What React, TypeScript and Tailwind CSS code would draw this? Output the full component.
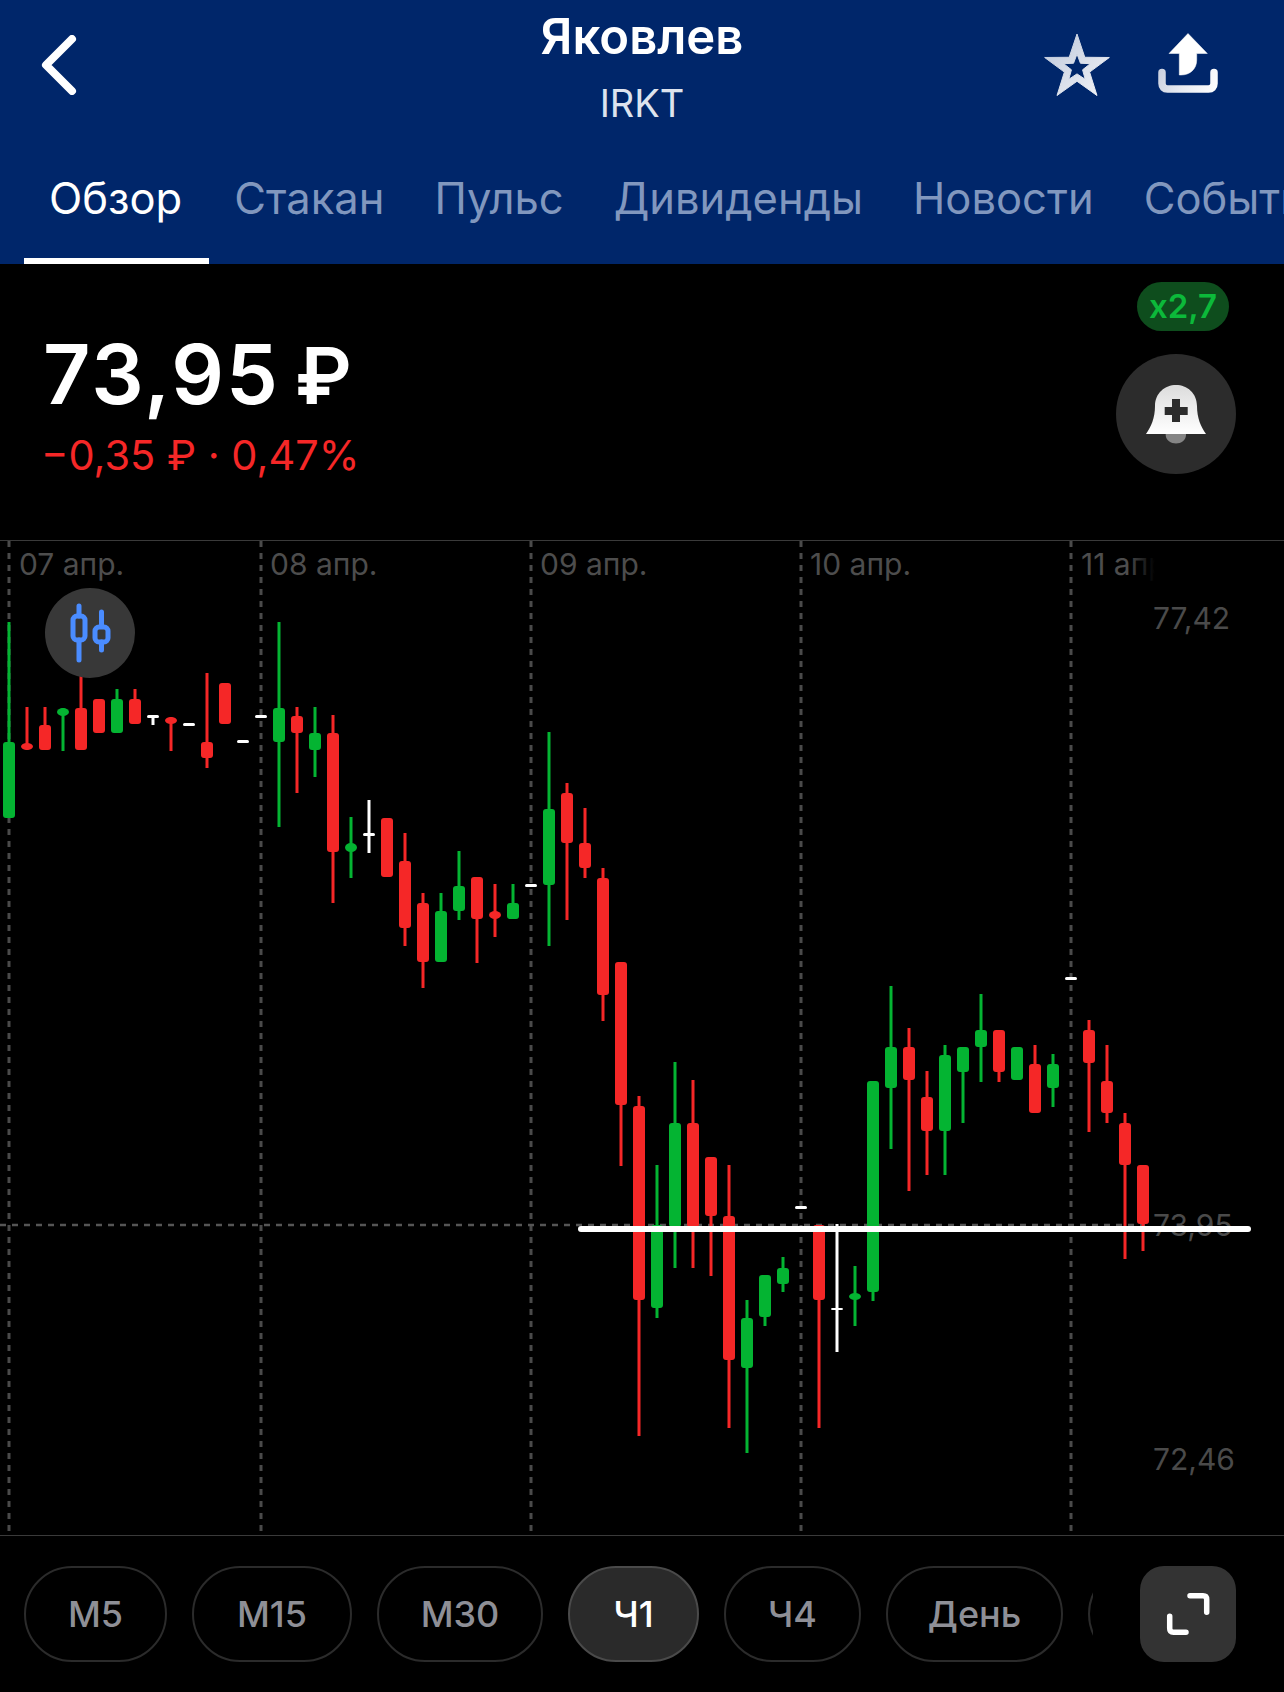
import React from "react";

type Candle = ["g" | "r" | "w", number, number, number, number];

const COLORS = { g: "#04B432", r: "#F52727", w: "#FFFFFF" };

// kind, wick top, wick bottom, body top, body bottom (0 wick = no wick)
const CANDLES: Candle[] = [
  ["g", 622, 818, 742, 818],
  ["r", 707, 750, 743, 750],
  ["r", 707, 750, 725, 750],
  ["g", 708, 751, 708, 716],
  ["r", 660, 750, 708, 750],
  ["r", 0, 0, 699, 733],
  ["g", 689, 733, 699, 733],
  ["r", 689, 724, 699, 724],
  ["w", 716, 725, 715, 718],
  ["r", 717, 751, 717, 724],
  ["w", 0, 0, 723, 726],
  ["r", 673, 768, 742, 758],
  ["r", 0, 0, 683, 724],
  ["w", 0, 0, 740, 743],
  ["w", 0, 0, 715, 718],
  ["g", 622, 827, 708, 742],
  ["r", 707, 793, 716, 733],
  ["g", 707, 777, 733, 750],
  ["r", 715, 903, 733, 852],
  ["g", 817, 878, 843, 852],
  ["w", 800, 853, 833, 836],
  ["r", 0, 0, 818, 877],
  ["r", 833, 946, 861, 928],
  ["r", 893, 988, 903, 962],
  ["g", 893, 962, 911, 962],
  ["g", 851, 920, 886, 911],
  ["r", 877, 963, 877, 919],
  ["r", 884, 937, 911, 919],
  ["g", 884, 919, 903, 919],
  ["w", 0, 0, 884, 887],
  ["g", 732, 946, 809, 885],
  ["r", 783, 920, 793, 843],
  ["r", 808, 878, 843, 868],
  ["r", 868, 1021, 878, 995],
  ["r", 962, 1166, 962, 1105],
  ["r", 1096, 1436, 1106, 1300],
  ["g", 1165, 1318, 1225, 1308],
  ["g", 1062, 1268, 1123, 1227],
  ["r", 1080, 1268, 1123, 1227],
  ["r", 1157, 1276, 1157, 1216],
  ["r", 1165, 1428, 1216, 1360],
  ["g", 1300, 1453, 1318, 1368],
  ["g", 1275, 1326, 1275, 1317],
  ["g", 1257, 1292, 1268, 1284],
  ["w", 0, 0, 1206, 1209],
  ["r", 1225, 1428, 1225, 1300],
  ["w", 1224, 1352, 1308, 1310],
  ["g", 1266, 1326, 1293, 1300],
  ["g", 1081, 1301, 1081, 1292],
  ["g", 986, 1149, 1047, 1088],
  ["r", 1028, 1191, 1047, 1080],
  ["r", 1071, 1175, 1097, 1131],
  ["g", 1045, 1175, 1055, 1131],
  ["g", 1047, 1123, 1047, 1072],
  ["g", 994, 1082, 1030, 1047],
  ["r", 1030, 1082, 1030, 1072],
  ["g", 0, 0, 1047, 1080],
  ["r", 1045, 1113, 1064, 1113],
  ["g", 1054, 1107, 1064, 1088],
  ["w", 0, 0, 977, 980],
  ["r", 1020, 1132, 1030, 1063],
  ["r", 1045, 1123, 1081, 1113],
  ["r", 1113, 1259, 1123, 1165],
  ["r", 1165, 1251, 1165, 1224],
];

const GRID_X = [9, 261, 531, 801, 1071];
const DATES: [number, string][] = [
  [19, "07 апр."],
  [270, "08 апр."],
  [540, "09 апр."],
  [810, "10 апр."],
];
const AXIS_FONT = "Inter, 'Noto Sans', sans-serif";

function CandleMark({ c, i }: { c: Candle; i: number }) {
  const [kind, wt, wb, bt, bb] = c;
  const cx = 9 + 18 * i;
  const fill = COLORS[kind];
  const h = bb - bt;
  const thin = h < 10;
  return (
    <g fill={fill}>
      {wt > 0 && <rect x={cx - 1.5} y={wt} width={3} height={wb - wt} />}
      <rect
        x={cx - 6}
        y={bt}
        width={12}
        height={h}
        rx={kind === "w" ? 1.5 : thin ? 6 : 3}
        ry={kind === "w" ? 1.5 : thin ? h / 2 : 3}
      />
    </g>
  );
}

function Chart() {
  return (
    <svg
      className="block w-[1284px] h-[994px]"
      viewBox="0 541 1284 994"
      xmlns="http://www.w3.org/2000/svg"
    >
      <defs>
        <linearGradient id="fadeDate" gradientUnits="userSpaceOnUse" x1="1128" y1="0" x2="1155" y2="0">
          <stop offset="0" stopColor="#4d4d4d" />
          <stop offset="1" stopColor="#4d4d4d" stopOpacity="0" />
        </linearGradient>
      </defs>
      {GRID_X.map((x) => (
        <line key={x} x1={x} x2={x} y1={541} y2={1535} stroke="#4a4a4a" strokeWidth={3} strokeDasharray="6 6" />
      ))}
      <line x1={0} x2={1145} y1={1225} y2={1225} stroke="#555555" strokeWidth={2.5} strokeDasharray="6 6" />
      {DATES.map(([x, t]) => (
        <text key={t} x={x} y={575} fontFamily={AXIS_FONT} fontSize={30} fill="#4d4d4d">
          {t}
        </text>
      ))}
      <text x={1081} y={575} fontFamily={AXIS_FONT} fontSize={30} fill="url(#fadeDate)">
        11 апр.
      </text>
      <text x={1153} y={629} fontFamily={AXIS_FONT} fontSize={30} fill="#4a4a4a">
        77,42
      </text>
      <text x={1153} y={1236} fontFamily={AXIS_FONT} fontSize={30} fill="#4a4a4a">
        73,95
      </text>
      <text x={1153} y={1470} fontFamily={AXIS_FONT} fontSize={30} fill="#4a4a4a">
        72,46
      </text>
      {CANDLES.map((c, i) => (
        <CandleMark key={i} c={c} i={i} />
      ))}
      <rect x={578} y={1226} width={673} height={6} rx={3} fill="#FFFFFF" />
    </svg>
  );
}

function starPath(cx: number, cy: number, r: number, ratio: number) {
  const outer: string[] = [];
  for (let k = 0; k < 10; k++) {
    const rad = k % 2 === 0 ? r : r * ratio;
    const a = (-90 + k * 36) * (Math.PI / 180);
    outer.push(`${(cx + rad * Math.cos(a)).toFixed(2)} ${(cy + rad * Math.sin(a)).toFixed(2)}`);
  }
  return "M" + outer.join("L") + "Z";
}

function StarIcon() {
  return (
    <svg width="72" height="70" viewBox="0 0 72 70" className="block">
      <defs>
        <linearGradient id="starG" x1="0" y1="0" x2="1" y2="1">
          <stop offset="0" stopColor="#bcc6da" />
          <stop offset="1" stopColor="#f4f5f8" />
        </linearGradient>
      </defs>
      <path
        d={starPath(36, 36, 34, 0.39) + starPath(36, 36, 14, 0.42)}
        fill="url(#starG)"
        fillRule="evenodd"
        stroke="url(#starG)"
        strokeWidth={1}
        strokeLinejoin="round"
      />
    </svg>
  );
}

function ShareIcon() {
  return (
    <svg width="62" height="62" viewBox="1157 32 62 62" className="block">
      <defs>
        <linearGradient id="shareG" gradientUnits="userSpaceOnUse" x1="1158" y1="60" x2="1218" y2="90">
          <stop offset="0" stopColor="#c4cbdc" />
          <stop offset="0.5" stopColor="#e8ebf2" />
          <stop offset="1" stopColor="#ffffff" />
        </linearGradient>
      </defs>
      <path
        d="M1188 33.5L1207.3 53.5H1196.7V60C1196.7 69 1190 75 1181 75H1179.3V53.5H1169Z"
        fill="#ffffff"
        stroke="#ffffff"
        strokeWidth={0.5}
        strokeLinejoin="round"
      />
      <path
        d="M1162 72.5V83.5C1162 87 1164 89 1167.5 89H1208.5C1212 89 1214 87 1214 83.5V72.5"
        fill="none"
        stroke="url(#shareG)"
        strokeWidth={7.5}
        strokeLinecap="round"
      />
    </svg>
  );
}

function BellIcon() {
  return (
    <svg width="62" height="60" viewBox="1145 385 62 60" className="block">
      <defs>
        <linearGradient id="bellG" x1="0" y1="0" x2="0" y2="1">
          <stop offset="0" stopColor="#dcdcdc" />
          <stop offset="1" stopColor="#ffffff" />
        </linearGradient>
      </defs>
      <path d="M1165.7 435H1186V436C1186 441 1181 444.5 1176 444.5C1171 444.5 1165.7 441 1165.7 436Z" fill="#858585" />
      <path
        d="M1146 435C1151 428 1155 419 1155 407C1155 394 1165 386 1176 386C1187 386 1197 394 1197 407C1197 419 1201 428 1206 435Z"
        fill="url(#bellG)"
      />
      <path d="M1172 400H1180V408H1187.7V416H1180V423H1172V416H1164.7V408H1172Z" fill="#2c2c2c" />
    </svg>
  );
}

const PERIODS: { label: string; w: string; active?: boolean }[] = [
  { label: "М5", w: "w-[143px]" },
  { label: "М15", w: "w-[160px]" },
  { label: "М30", w: "w-[166px]" },
  { label: "Ч1", w: "w-[131px]", active: true },
  { label: "Ч4", w: "w-[137px]" },
  { label: "День", w: "w-[177px]" },
];

const TABS = ["Обзор", "Стакан", "Пульс", "Дивиденды", "Новости", "События"];

export default function App() {
  return (
    <div className="w-[1284px] h-[1692px] bg-black overflow-hidden flex flex-col font-['Inter','Noto_Sans',sans-serif]">
      <header className="h-[264px] shrink-0 bg-[#00266A] flex flex-col">
        <div className="h-[143px] grid grid-cols-[1fr_auto_1fr] items-start">
          <div className="pl-[40px] pt-[35px]">
            <svg width="38" height="60" viewBox="0 0 38 60" className="block">
              <path d="M32 4L6 30L32 56" fill="none" stroke="#fff" strokeWidth={8} strokeLinecap="round" strokeLinejoin="round" />
            </svg>
          </div>
          <div className="flex flex-col items-center pt-[8px]">
            <div className="text-[49px] leading-[58px] font-semibold text-white">Яковлев</div>
            <div className="text-[38px] leading-[44px] mt-[15px] font-normal text-[#DDE3EE]">IRKT</div>
          </div>
          <div className="flex justify-end items-start gap-[44px] pr-[65px] pt-[32px]">
            <StarIcon />
            <ShareIcon />
          </div>
        </div>
        <nav className="h-[121px] flex overflow-hidden">
          <div className="flex pl-[24px] pt-[22px] whitespace-nowrap">
            {TABS.map((t, i) => (
              <div
                key={t}
                className={
                  i === 0
                    ? "pl-[25px] pr-[27px] h-[99px] pt-[7px] text-[43.5px] leading-[52px] text-white border-b-[6px] border-white shrink-0"
                    : "px-[25px] h-[99px] pt-[7px] text-[43.5px] leading-[52px] text-[#8197BE] shrink-0"
                }
              >
                {t}
              </div>
            ))}
          </div>
        </nav>
      </header>

      <section className="h-[276px] shrink-0 flex justify-between">
        <div className="pl-[41px] pt-[65px]">
          <div className="ml-[2px] text-[82.5px] leading-[90px] font-semibold text-white">
            <span className="tracking-[2px]">73,95</span>
            <span className="ml-[15px] text-[78px]">₽</span>
          </div>
          <div className="text-[41.5px] leading-[48px] mt-[10px] text-[#F52727]">−0,35 ₽ · 0,47%</div>
        </div>
        <div className="flex flex-col items-end pr-[48px] pt-[18px]">
          <div className="w-[92px] h-[49px] mr-[7px] rounded-full bg-[#0E4D1D] text-[#0CB93A] text-[33px] leading-[49px] text-center font-semibold">
            x2,7
          </div>
          <div className="w-[120px] h-[120px] mt-[23px] rounded-full bg-[#2C2C2C] flex items-center justify-center">
            <BellIcon />
          </div>
        </div>
      </section>

      <section className="h-[996px] shrink-0 relative border-y border-[#3a3a3a]">
        <Chart />
        <div className="absolute left-[45px] top-[47px] w-[90px] h-[90px] rounded-full bg-[#383838] flex items-center justify-center">
          <svg width="46" height="60" viewBox="0 0 46 60" className="block">
            <g fill="none" stroke="#4A8CFF" strokeWidth={5} strokeLinecap="round" strokeLinejoin="round">
              <path d="M12 3V13M12 37V57" />
              <rect x="6" y="13" width="12" height="24" rx="4" />
              <path d="M34.5 9V23M34.5 39V47" />
              <rect x="28" y="24" width="13" height="15" rx="4" />
            </g>
          </svg>
        </div>
      </section>

      <footer className="flex-1 flex items-start pt-[30px] pl-[24px] pr-[48px]">
        <div className="w-[1069px] h-[96px] flex gap-[25px] overflow-hidden shrink-0">
          {PERIODS.map((p) => (
            <div
              key={p.label}
              className={
                p.w +
                " h-[96px] shrink-0 rounded-full border-2 flex items-center justify-center text-[36px] font-medium " +
                (p.active
                  ? "bg-[#2A2A2A] border-[#4A4A4A] text-white"
                  : "border-[#2B2B2B] text-[#8E8F96]")
              }
            >
              {p.label}
            </div>
          ))}
          <div className="w-[120px] h-[96px] shrink-0 rounded-full border-2 border-[#2B2B2B]" />
        </div>
        <div className="ml-auto w-[96px] h-[96px] rounded-[24px] bg-[#333333] flex items-center justify-center">
          <svg width="46" height="46" viewBox="1165 1591 46 46" className="block">
            <path
              d="M1190 1595.7H1203Q1206.7 1595.7 1206.7 1599.4V1612.3M1169.7 1616.3V1628.6Q1169.7 1632.3 1173.4 1632.3H1186"
              fill="none"
              stroke="#fff"
              strokeWidth={5.5}
              strokeLinecap="round"
            />
          </svg>
        </div>
      </footer>
    </div>
  );
}
